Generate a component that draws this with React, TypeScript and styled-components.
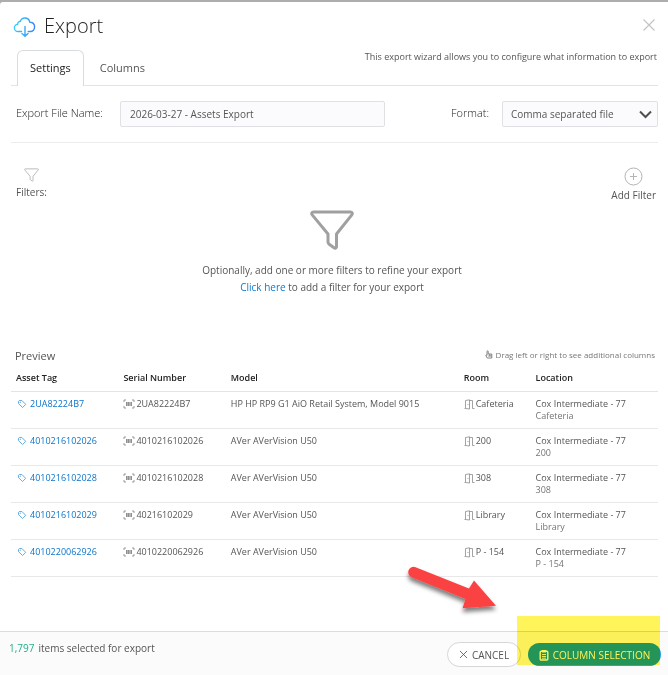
import React, { useState } from "react";
import styled, { createGlobalStyle, css } from "styled-components";

const GlobalStyle = createGlobalStyle`
  *, *::before, *::after { box-sizing: border-box; }
  html { background: #adadad; }
  body { margin: 0; font-family: "Open Sans", "Noto Sans", sans-serif; color: #555; }
  button, input, select { font-family: inherit; color: inherit; }
`;

const Backdrop = styled.div`
  display: flex;
  min-height: 100vh;
  padding-top: 2px;
  background: #adadad;
`;

const Dialog = styled.section`
  flex: 1;
  min-width: 0;
  display: flex;
  flex-direction: column;
  background: #fff;
  border-radius: 3px 0 0 0;
`;

const Header = styled.header`
  display: flex;
  align-items: center;
  gap: 7px;
  height: 48px;
  padding: 0 12px 0 13px;
`;

const Title = styled.h1`
  flex: 1;
  margin: 0;
  font-size: 20px;
  line-height: 28px;
  font-weight: 300;
  color: #222;
`;

const CloseButton = styled.button`
  display: flex;
  padding: 0 0 2px;
  border: 0;
  background: none;
  color: #c4c4c4;
  cursor: pointer;
`;

const Body = styled.main`
  flex: 1;
  padding: 0 10px 0 11px;
`;

const TabBar = styled.div`
  display: flex;
  justify-content: space-between;
  height: 36px;
  padding-left: 6px;
  border-bottom: 1px solid #e2e4e6;
`;

const TabList = styled.div`
  display: flex;
`;

const Tab = styled.button<{ $active: boolean }>`
  height: 36px;
  padding: 0 12px 2px;
  margin-right: 3px;
  border: 1px solid transparent;
  border-bottom: 0;
  border-radius: 6px 6px 0 0;
  background: none;
  font-size: 11px;
  line-height: 16px;
  cursor: pointer;
  ${({ $active }) =>
    $active &&
    css`
      border-color: #d9dcdf;
      background: #fff;
      color: #222;
    `}
`;

const Hint = styled.p`
  margin: 0;
  font-size: 9px;
  line-height: 14px;
  padding-right: 1px;
  color: #555;
`;

const FieldRow = styled.div`
  display: flex;
  align-items: center;
  justify-content: space-between;
  gap: 16px;
  padding: 15px 0;
  border-bottom: 1px solid #ececec;
`;

const Field = styled.div<{ $grow?: boolean }>`
  display: flex;
  align-items: center;
  flex: ${({ $grow }) => ($grow ? "0 1 374px" : "0 0 auto")};
`;

const FieldLabel = styled.label<{ $width: number }>`
  flex: 0 0 ${({ $width }) => $width}px;
  padding: 0 0 2px 5px;
  font-size: 11px;
  line-height: 16px;
  font-weight: 300;
  color: #222;
`;

const controlBox = css`
  height: 26px;
  border: 1px solid #dfe1e5;
  border-radius: 2px;
  background: #fbfbfe;
  font-size: 10px;
`;

const TextInput = styled.input`
  ${controlBox}
  flex: 1;
  min-width: 0;
  padding: 0 9px;
`;

const SelectWrap = styled.div`
  position: relative;
  width: 156px;
  svg { position: absolute; right: 6px; top: 9px; pointer-events: none; }
`;

const Select = styled.select`
  ${controlBox}
  width: 100%;
  padding: 0 24px 0 8px;
  appearance: none;
`;

const FilterBar = styled.div`
  display: flex;
  justify-content: space-between;
  padding: 24px 2px 0 5px;
`;

const FilterCaption = styled.div`
  display: flex;
  flex-direction: column;
  align-items: center;
  gap: 3px;
  padding-top: 1px;
  font-size: 10px;
  line-height: 14px;
`;

const AddFilterButton = styled.button`
  display: flex;
  flex-direction: column;
  align-items: center;
  gap: 2px;
  padding: 0 0 4px;
  border: 0;
  background: none;
  font-size: 10px;
  line-height: 14px;
  cursor: pointer;
`;

const EmptyState = styled.div`
  display: flex;
  flex-direction: column;
  align-items: center;
  padding: 4px 5px 51px 0;
  text-align: center;
  font-size: 10px;
  line-height: 17px;
  p { margin: 12px 0 0; }
  a { color: #0a7ad1; text-decoration: none; }
`;

const PreviewHead = styled.div`
  display: flex;
  justify-content: space-between;
  padding: 0 3px 0 4px;
  h2 { margin: 0; font-size: 11px; line-height: 18px; font-weight: 400; }
`;

const DragHint = styled.span`
  display: flex;
  align-items: center;
  gap: 3px;
  height: 14px;
  font-size: 8px;
  color: #777;
`;

const Table = styled.table`
  width: 100%;
  table-layout: fixed;
  border-collapse: collapse;
  font-size: 9px;
  line-height: 12px;
`;

const Col = styled.col<{ $share: number }>`
  width: ${({ $share }) => $share}%;
`;

const HeadCell = styled.th`
  padding: 7px 5px;
  border-bottom: 1px solid #e4e4e4;
  text-align: left;
  font-weight: 600;
  color: #222;
`;

const Cell = styled.td`
  height: 37px;
  padding: 6px 5px;
  border-bottom: 1px solid #e8e8e8;
  vertical-align: top;
`;

const IconText = styled.span`
  display: flex;
  align-items: center;
  gap: 1px;
`;

const TagLink = styled.a`
  display: flex;
  align-items: center;
  gap: 3px;
  padding-left: 1px;
  color: #0a74cc;
  text-decoration: none;
`;

const Faded = styled.div`
  color: #757575;
`;

const Footer = styled.footer`
  position: relative;
  display: flex;
  align-items: center;
  justify-content: space-between;
  height: 44px;
  padding: 2px 7px 0 9px;
  border-top: 1px solid #dcdcdc;
  background: #fbfbfb;
`;

const Count = styled.div`
  align-self: flex-start;
  display: flex;
  gap: 4px;
  padding-top: 7px;
  font-size: 10px;
  line-height: 14px;
  strong { font-weight: 400; color: #1fb38a; }
`;

const Actions = styled.div`
  display: flex;
  align-items: center;
  gap: 7px;
`;

const PillButton = styled.button<{ $primary?: boolean }>`
  display: flex;
  align-items: center;
  justify-content: center;
  gap: 4px;
  width: ${({ $primary }) => ($primary ? 133 : 74)}px;
  height: ${({ $primary }) => ($primary ? 23 : 25)}px;
  padding: 0;
  border: ${({ $primary }) => ($primary ? "0" : "1px solid #d6d6d6")};
  border-radius: 13px;
  background: ${({ $primary }) => ($primary ? "#249bf5" : "#fff")};
  color: ${({ $primary }) => ($primary ? "#fff" : "#555")};
  font-size: 10px;
  font-weight: ${({ $primary }) => ($primary ? 500 : 400)};
  white-space: nowrap;
  cursor: pointer;
`;

const Highlight = styled.div`
  position: absolute;
  right: 8px;
  bottom: 10px;
  width: 143px;
  height: 49px;
  background: #fff45a;
  mix-blend-mode: multiply;
  pointer-events: none;
`;

const Pointer = styled.svg`
  position: absolute;
  right: 164px;
  bottom: 56px;
  pointer-events: none;
`;

const FunnelIcon = ({ width, height, stroke, color }: { width: number; height: number; stroke: number; color: string }) => (
  <svg width={width} height={height} viewBox="0 0 44 40" fill="none" stroke={color} strokeWidth={stroke} strokeLinejoin="round" aria-hidden="true">
    <path d="M3.5 2H40.5C42.3 2 42.8 3.600 41.800 4.900L26.500 24V36.600C26.500 38.200 25.100 38.700 24 37.800L19.200 34.300Q18 33.300 18 32V24L2.200 4.900C1.200 3.600 1.700 2 3.500 2Z" />
  </svg>
);

const CloudIcon = () => (
  <svg width="24" height="24" viewBox="0 0 24 24" fill="none" stroke="url(#cloud)" strokeWidth="1.4" strokeLinecap="round" strokeLinejoin="round" aria-hidden="true">
    <defs>
      <linearGradient id="cloud" x1="1" y1="10" x2="22" y2="14" gradientUnits="userSpaceOnUse">
        <stop offset="0" stopColor="#35d3fb" />
        <stop offset="1" stopColor="#3a86f6" />
      </linearGradient>
    </defs>
    <path d="M8.500 17.500H5.300A3.600 3.600 0 0 1 4.700 10.300C4.500 8.500 5.800 7.300 7.400 7.300C8 5.200 9.700 4 11.800 4C14.400 4 16.400 5.800 16.800 8.200C19.600 8 21.600 10 21.600 12.800C21.600 15.500 19.800 17.500 17.300 17.500H15.200" />
    <path d="M12 12.500V22M9 19.500L12 22.200L15 19.500" />
  </svg>
);

const CrossIcon = ({ size, stroke }: { size: number; stroke: number }) => (
  <svg width={size} height={size} viewBox="0 0 14 14" fill="none" stroke="currentColor" strokeWidth={stroke} aria-hidden="true">
    <path d="M1.500 1.500L12.500 12.500M12.500 1.500L1.500 12.500" />
  </svg>
);

const ChevronIcon = () => (
  <svg width="13" height="9" viewBox="0 0 13 9" fill="none" stroke="#4f4f4f" strokeWidth="2" aria-hidden="true">
    <path d="M1 1.500L6.500 7L12 1.500" />
  </svg>
);

const PlusCircleIcon = () => (
  <svg width="19" height="19" viewBox="0 0 19 19" fill="none" stroke="#b4b4b4" aria-hidden="true">
    <circle cx="9.500" cy="9.500" r="8.500" />
    <path d="M9.500 6V13M6 9.500H13" />
  </svg>
);

const TagIcon = () => (
  <svg width="10" height="10" viewBox="0 0 10 10" fill="none" stroke="#55a3df" strokeWidth="0.9" strokeLinejoin="round" aria-hidden="true">
    <path d="M2.300 1.500H4.900L8.700 5.300L5.600 8.500L1.500 4.600V2.300Z" />
    <circle cx="3.200" cy="3.200" r="0.300" />
  </svg>
);

const BarcodeIcon = () => (
  <svg width="12" height="10" viewBox="0 0 12 10" fill="none" stroke="#8f8f8f" aria-hidden="true">
    <path d="M3 1H1V3M9 1H11V3M3 9H1V7M9 9H11V7" strokeWidth="0.900" />
    <path d="M3 5H9" stroke="#b5b5b5" strokeWidth="4" />
    <path d="M3.500 3V7M5.500 3V7M8.500 3V7" />
  </svg>
);

const DoorIcon = () => (
  <svg width="11" height="11" viewBox="0 0 11 11" fill="none" stroke="#8c8c8c" strokeWidth="0.800" aria-hidden="true">
    <path d="M0.500 9.500H1.500V1.500L5.500 0.800V10L1.500 9.500M5.500 1.500H8.500V9.500H10.500M4 5V6" />
  </svg>
);

const HandIcon = () => (
  <svg width="8" height="9" viewBox="0 0 8 9" fill="none" stroke="#777" strokeWidth="0.900" aria-hidden="true">
    <path d="M2 5.500V1.200Q2.600 0.400 3.200 1.200V4H6.800V8H2.200L0.800 5.500L2 4.800M3.200 6H6.800M4.800 4V6" />
  </svg>
);

const ClipboardIcon = () => (
  <svg width="10" height="12" viewBox="0 0 10 12" fill="none" stroke="currentColor" aria-hidden="true">
    <rect x="1.200" y="2.200" width="7.600" height="8.800" rx="1" strokeWidth="1.400" />
    <path d="M3 1.500H7V3H3Z" fill="currentColor" />
    <path d="M3 5.500H7M3 7.500H7M3 9.200H7" strokeWidth="0.900" />
  </svg>
);

const columns = [
  { name: "Asset Tag", share: 16.6 },
  { name: "Serial Number", share: 16.6 },
  { name: "Model", share: 36 },
  { name: "Room", share: 11.1 },
  { name: "Location", share: 19.7 },
];

const assets = [
  { tag: "2UA82224B7", serial: "2UA82224B7", model: "HP HP RP9 G1 AiO Retail System, Model 9015", room: "Cafeteria" },
  { tag: "4010216102026", serial: "4010216102026", model: "AVer AVerVision U50", room: "200" },
  { tag: "4010216102028", serial: "4010216102028", model: "AVer AVerVision U50", room: "308" },
  { tag: "4010216102029", serial: "40216102029", model: "AVer AVerVision U50", room: "Library" },
  { tag: "4010220062926", serial: "4010220062926", model: "AVer AVerVision U50", room: "P - 154" },
];

export default function App() {
  const [tab, setTab] = useState("Settings");
  const [fileName, setFileName] = useState("2026-03-27 - Assets Export");

  return (
    <>
      <GlobalStyle />
      <Backdrop>
        <Dialog role="dialog" aria-labelledby="export-title">
          <Header>
            <CloudIcon />
            <Title id="export-title">Export</Title>
            <CloseButton aria-label="Close"><CrossIcon size={14} stroke={1.2} /></CloseButton>
          </Header>
          <Body>
            <TabBar>
              <TabList role="tablist">
                {["Settings", "Columns"].map((name) => (
                  <Tab key={name} role="tab" aria-selected={tab === name} $active={tab === name} onClick={() => setTab(name)}>
                    {name}
                  </Tab>
                ))}
              </TabList>
              <Hint>This export wizard allows you to configure what information to export</Hint>
            </TabBar>
            <FieldRow>
              <Field $grow>
                <FieldLabel $width={109} htmlFor="file-name">Export File Name:</FieldLabel>
                <TextInput id="file-name" value={fileName} onChange={(e) => setFileName(e.target.value)} />
              </Field>
              <Field>
                <FieldLabel $width={56} htmlFor="format">Format:</FieldLabel>
                <SelectWrap>
                  <Select id="format"><option>Comma separated file</option></Select>
                  <ChevronIcon />
                </SelectWrap>
              </Field>
            </FieldRow>
            <FilterBar>
              <FilterCaption>
                <FunnelIcon width={15} height={14} stroke={2.6} color="#b4b4b4" />
                Filters:
              </FilterCaption>
              <AddFilterButton><PlusCircleIcon />Add Filter</AddFilterButton>
            </FilterBar>
            <EmptyState>
              <FunnelIcon width={44} height={40} stroke={3} color="#a0a0a0" />
              <p>
                Optionally, add one or more filters to refine your export
                <br />
                <a href="#add-filter">Click here</a> to add a filter for your export
              </p>
            </EmptyState>
            <PreviewHead>
              <h2>Preview</h2>
              <DragHint><HandIcon />Drag left or right to see additional columns</DragHint>
            </PreviewHead>
            <Table>
              <colgroup>{columns.map((c) => <Col key={c.name} $share={c.share} />)}</colgroup>
              <thead>
                <tr>{columns.map((c) => <HeadCell key={c.name} scope="col">{c.name}</HeadCell>)}</tr>
              </thead>
              <tbody>
                {assets.map((a) => (
                  <tr key={a.tag}>
                    <Cell><TagLink href={`#${a.tag}`}><TagIcon />{a.tag}</TagLink></Cell>
                    <Cell><IconText><BarcodeIcon />{a.serial}</IconText></Cell>
                    <Cell>{a.model}</Cell>
                    <Cell><IconText><DoorIcon />{a.room}</IconText></Cell>
                    <Cell>Cox Intermediate - 77<Faded>{a.room}</Faded></Cell>
                  </tr>
                ))}
              </tbody>
            </Table>
          </Body>
          <Footer>
            <Count><strong>1,797</strong><span>items selected for export</span></Count>
            <Actions>
              <PillButton><CrossIcon size={9} stroke={1.3} />CANCEL</PillButton>
              <PillButton $primary><ClipboardIcon />COLUMN SELECTION</PillButton>
            </Actions>
            <Highlight />
            <Pointer width="100" height="60" viewBox="404 559 100 60" aria-hidden="true">
              <defs>
                <filter id="arrow-shadow" x="-20%" y="-20%" width="140%" height="150%">
                  <feDropShadow dx="0" dy="4" stdDeviation="2" floodColor="#000" floodOpacity="0.5" />
                </filter>
              </defs>
              <path d="M415.600 567.200L469 588.500L474 580.500L496 605.800L462.500 608.200L465.500 599L411.500 577.200A5.300 5.300 0 0 1 415.600 567.200Z" fill="#fb4343" filter="url(#arrow-shadow)" />
            </Pointer>
          </Footer>
        </Dialog>
      </Backdrop>
    </>
  );
}
